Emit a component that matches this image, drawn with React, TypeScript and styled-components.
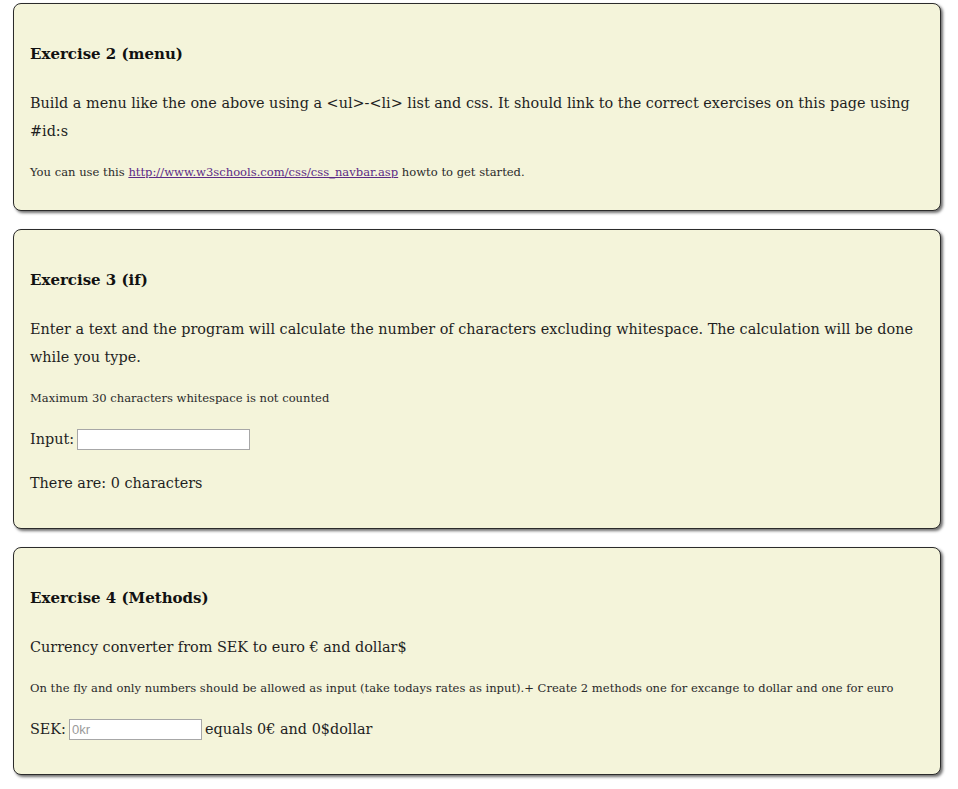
import React from "react";
import styled, { createGlobalStyle } from "styled-components";

const GlobalStyle = createGlobalStyle`
  html, body {
    margin: 0;
    padding: 0;
    background: #ffffff;
  }
  body {
    font-family: "DejaVu Serif", "Liberation Serif", serif;
    color: #1f1f1f;
  }
`;

const Page = styled.main`
  display: flex;
  flex-direction: column;
  gap: 18px;
  padding: 3px 17px 14px 13px;
`;

const Card = styled.section`
  background: #f4f4da;
  border: 1px solid #2b2b2b;
  border-radius: 8px;
  box-shadow: 2px 2px 3px #6f6f6f;
  padding: 17px 16px 15px;
`;

const Title = styled.h3`
  margin: 17px 0 19px;
  font-size: 15px;
  line-height: 32px;
  font-weight: bold;
  color: #111;
`;

const Text = styled.p`
  margin: 0 0 16px;
  font-size: 14.4px;
  line-height: 28px;
`;

const Note = styled.p`
  margin: 0 0 16px;
  font-size: 11.55px;
  line-height: 22px;
  color: #2a2a2a;
  &:last-child {
    margin-bottom: 12px;
  }
`;

const Link = styled.a`
  color: #5b2a86;
  text-decoration: underline;
`;

const Row = styled.div`
  display: flex;
  align-items: center;
  gap: 3px;
  margin: 0 0 16px;
  font-size: 14.4px;
  line-height: 28px;
`;

const Field = styled.input<{ $w: number }>`
  box-sizing: border-box;
  width: ${(p) => p.$w}px;
  height: 21px;
  border: 1px solid #a7a7a7;
  background: #fff;
  padding: 0 2px;
  margin: 0;
  font-family: "Liberation Sans Narrow", "Liberation Sans", sans-serif;
  font-size: 13px;
  &::placeholder {
    color: #9a9a9a;
  }
`;

export default function App() {
  return (
    <>
      <GlobalStyle />
      <Page>
        <Card>
          <Title>Exercise 2 (menu)</Title>
          <Text>
            Build a menu like the one above using a &lt;ul&gt;-&lt;li&gt; list and css. It should link to the
            correct exercises on this page using #id:s
          </Text>
          <Note>
            You can use this <Link href="#">http://www.w3schools.com/css/css_navbar.asp</Link> howto to get
            started.
          </Note>
        </Card>
        <Card>
          <Title>Exercise 3 (if)</Title>
          <Text>
            Enter a text and the program will calculate the number of characters excluding whitespace. The
            calculation will be done while you type.
          </Text>
          <Note>Maximum 30 characters whitespace is not counted</Note>
          <Row>
            Input: <Field $w={173} type="text" />
          </Row>
          <Row>There are: 0 characters</Row>
        </Card>
        <Card>
          <Title>Exercise 4 (Methods)</Title>
          <Text>Currency converter from SEK to euro € and dollar$</Text>
          <Note>
            On the fly and only numbers should be allowed as input (take todays rates as input).+ Create 2
            methods one for excange to dollar and one for euro
          </Note>
          <Row>
            SEK: <Field $w={133} type="text" placeholder="0kr" /> equals 0€ and 0$dollar
          </Row>
        </Card>
      </Page>
    </>
  );
}
